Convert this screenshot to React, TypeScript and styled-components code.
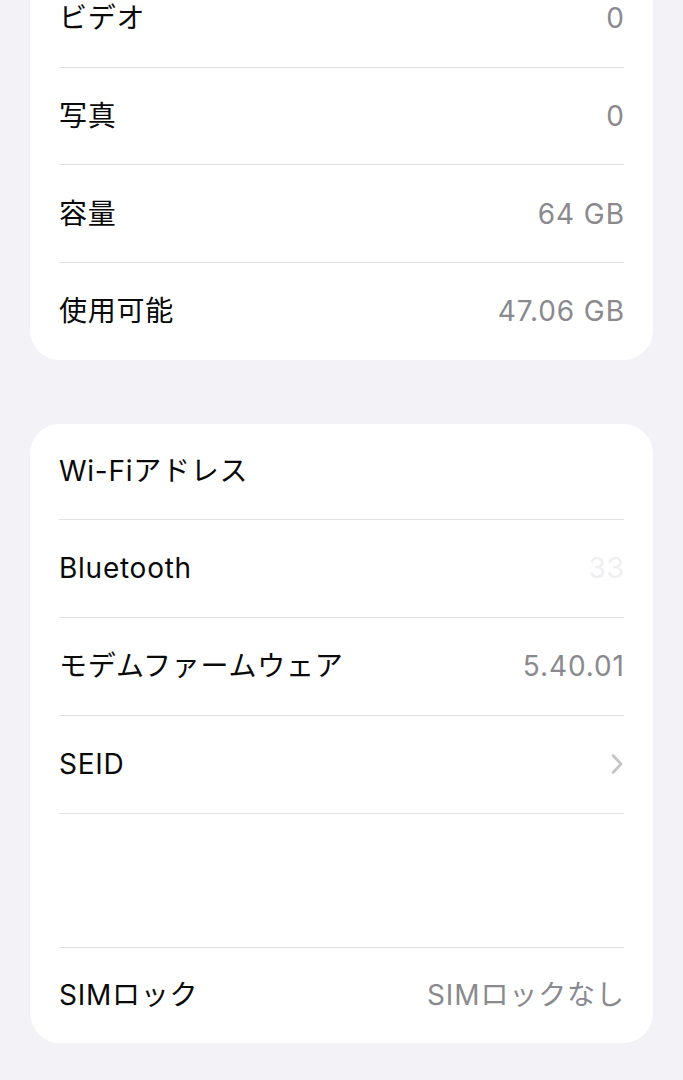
import React from "react";
import styled, { createGlobalStyle } from "styled-components";

const Global = createGlobalStyle`
  html, body { margin: 0; padding: 0; background: #f2f2f7; }
  body { font-family: "Inter", "Noto Sans CJK JP", sans-serif; -webkit-font-smoothing: antialiased; }
`;

const Page = styled.div`
  width: 683px;
  height: 1080px;
  overflow: hidden;
  background: #f2f2f7;
  box-sizing: border-box;
  padding: 0 30px;
`;

const Scroll = styled.div`
  margin-top: -30px;
  display: flex;
  flex-direction: column;
  gap: 64px;
`;

const Card = styled.section`
  background: #ffffff;
  border-radius: 30px;
  padding: 0 29px;
  display: flex;
  flex-direction: column;
`;

const Row = styled.div<{ $h?: number; $last?: boolean }>`
  height: ${(p) => p.$h ?? 96.67}px;
  display: flex;
  align-items: center;
  justify-content: space-between;
  border-bottom: ${(p) => (p.$last ? "none" : "1px solid #e2e2e6")};
  font-size: 28px;
  line-height: 1;
`;

const Label = styled.span`
  color: #0a0a0a;
  letter-spacing: 0.75px;
`;

const Value = styled.span<{ $faint?: boolean }>`
  color: ${(p) => (p.$faint ? "#efeff1" : "#8a8a8e")};
  letter-spacing: 0.9px;
  margin-right: -0.9px;
`;

const Chevron = () => (
  <svg width="14" height="22" viewBox="0 0 14 22" fill="none">
    <path d="M3 2.5 L11 11 L3 19.5" stroke="#c4c4c7" strokeWidth="2.6" strokeLinecap="round" strokeLinejoin="round" />
  </svg>
);

export default function App() {
  return (
    <>
      <Global />
      <Page>
        <Scroll>
          <Card>
            <Row><Label>ビデオ</Label><Value>0</Value></Row>
            <Row><Label>写真</Label><Value>0</Value></Row>
            <Row><Label>容量</Label><Value>64 GB</Value></Row>
            <Row $last><Label>使用可能</Label><Value>47.06 GB</Value></Row>
          </Card>
          <Card>
            <Row $h={95}><Label>Wi-Fiアドレス</Label><Value></Value></Row>
            <Row $h={97}><Label>Bluetooth</Label><Value $faint>33</Value></Row>
            <Row $h={97}><Label>モデムファームウェア</Label><Value>5.40.01</Value></Row>
            <Row $h={97}><Label>SEID</Label><Chevron /></Row>
            <Row $h={133}><Label></Label></Row>
            <Row $h={95} $last><Label>SIMロック</Label><Value>SIMロックなし</Value></Row>
          </Card>
        </Scroll>
      </Page>
    </>
  );
}
